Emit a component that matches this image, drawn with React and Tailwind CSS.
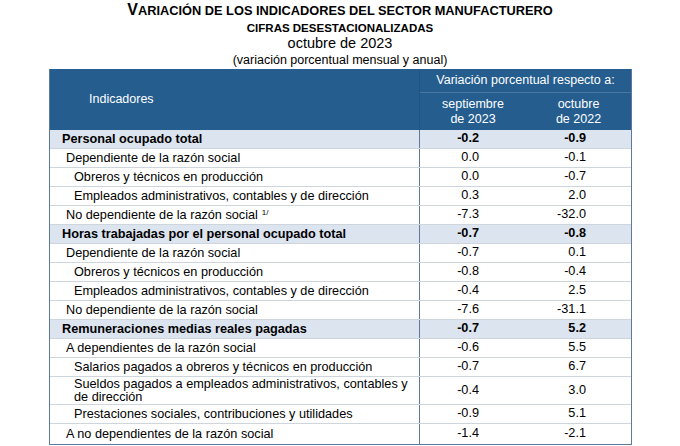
import React from "react";

const rows = [
  { label: "Personal ocupado total", a: "-0.2", b: "-0.9", level: 0 },
  { label: "Dependiente de la razón social", a: "0.0", b: "-0.1", level: 1 },
  { label: "Obreros y técnicos en producción", a: "0.0", b: "-0.7", level: 2 },
  { label: "Empleados administrativos, contables y de dirección", a: "0.3", b: "2.0", level: 2 },
  { label: "No dependiente de la razón social", a: "-7.3", b: "-32.0", level: 1, note: "1/" },
  { label: "Horas trabajadas por el personal ocupado total", a: "-0.7", b: "-0.8", level: 0 },
  { label: "Dependiente de la razón social", a: "-0.7", b: "0.1", level: 1 },
  { label: "Obreros y técnicos en producción", a: "-0.8", b: "-0.4", level: 2 },
  { label: "Empleados administrativos, contables y de dirección", a: "-0.4", b: "2.5", level: 2 },
  { label: "No dependiente de la razón social", a: "-7.6", b: "-31.1", level: 1 },
  { label: "Remuneraciones medias reales pagadas", a: "-0.7", b: "5.2", level: 0 },
  { label: "A dependientes de la razón social", a: "-0.6", b: "5.5", level: 1 },
  { label: "Salarios pagados a obreros y técnicos en producción", a: "-0.7", b: "6.7", level: 2 },
  { label: "Sueldos pagados a empleados administrativos, contables y de dirección", a: "-0.4", b: "3.0", level: 2, tall: true },
  { label: "Prestaciones sociales, contribuciones y utilidades", a: "-0.9", b: "5.1", level: 2 },
  { label: "A no dependientes de la razón social", a: "-1.4", b: "-2.1", level: 1, last: true },
];

const Row = ({ r }) => {
  const bold = r.level === 0;
  const height = r.tall ? "h-[28px]" : r.last ? "h-[20px]" : "h-[19px]";
  const indent = r.level === 0 ? "pl-[12px]" : r.level === 1 ? "pl-[16px]" : "pl-[24px]";
  return (
    <div
      className={`flex ${height} ${bold ? "bg-[#dce4ef] font-bold" : "bg-white"} ${
        r.last ? "" : "border-b border-[#cfd5dd]"
      }`}
    >
      <div className={`w-[370px] shrink-0 flex items-center border-r border-[#5d7a98] ${indent} pr-2`}>
        <span className={r.tall ? "leading-[13px]" : "leading-none"}>
          {r.label}
          {r.note && <span className="relative -top-[4px] text-[8px] ml-[4px]">{r.note}</span>}
        </span>
      </div>
      <div className="w-[106px] flex items-center justify-end pr-[47px]">{r.a}</div>
      <div className="flex-1 flex items-center justify-end pr-[45px]">{r.b}</div>
    </div>
  );
};

export default function App() {
  return (
    <div className="w-[680px] h-[446px] bg-white text-black font-['Liberation_Sans',Arial,sans-serif] overflow-hidden">
      {/* TITLES */}
      <div className="flex flex-col items-center">
        <div className="leading-[20px] font-bold uppercase">
          <span className="text-[16px]">V</span>
          <span className="text-[12.8px]">ariación de los indicadores del sector manufacturero</span>
        </div>
        <div className="leading-[14px] font-bold text-[11.5px]">CIFRAS DESESTACIONALIZADAS</div>
        <div className="leading-[17px] text-[14.5px]">octubre de 2023</div>
        <div className="leading-[16px] text-[12.5px]">(variación porcentual mensual y anual)</div>
      </div>

      {/* TABLE */}
      <div className="ml-[49px] mt-[1px] w-[583px] border-x border-b border-[#5d7a98] text-[12.7px]">
        {/* HEADER */}
        <div className="flex h-[61px] bg-[#245d8e] text-white text-[12.5px]">
          <div className="w-[370px] shrink-0 flex items-center pl-[39px] border-r border-[#1f5383]">
            Indicadores
          </div>
          <div className="flex-1 flex flex-col">
            <div className="h-[24px] flex items-center justify-center border-b border-[#4a78a3]">
              Variación porcentual respecto a:
            </div>
            <div className="flex-1 flex">
              <div className="w-[106px] flex items-center justify-center text-center leading-[15px]">
                septiembre
                <br />
                de 2023
              </div>
              <div className="flex-1 flex items-center justify-center text-center leading-[15px]">
                octubre
                <br />
                de 2022
              </div>
            </div>
          </div>
        </div>

        {/* BODY */}
        {rows.map((r, i) => (
          <Row key={i} r={r} />
        ))}
      </div>
    </div>
  );
}
